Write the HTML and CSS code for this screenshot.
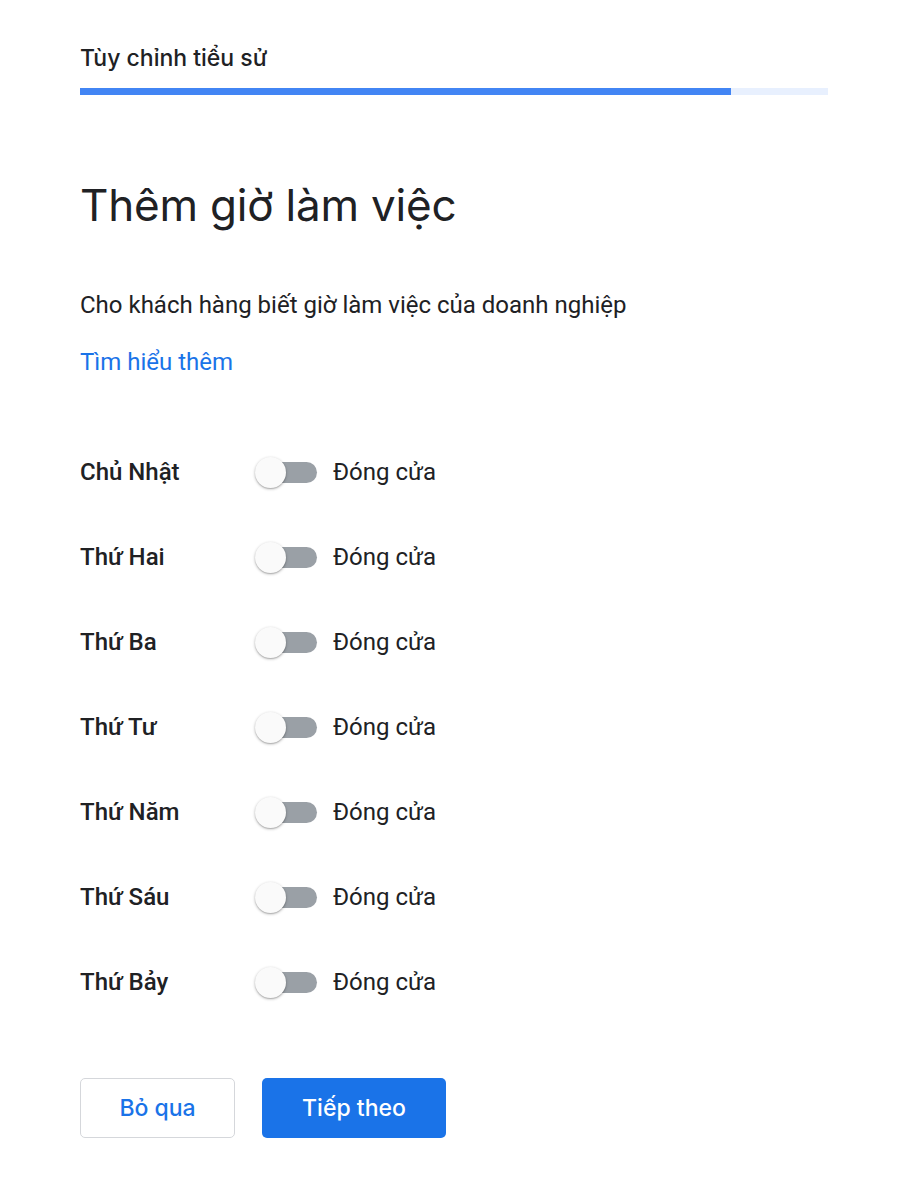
FILE: index.html
```html
<!DOCTYPE html>
<html lang="vi">
<head>
<meta charset="utf-8">
<title>Thêm giờ làm việc</title>
<link rel="stylesheet" href="styles.css">
</head>
<body>
<main class="page">
  <header class="top">
    <div class="top-title">Tùy chỉnh tiểu sử</div>
    <div class="progress"><div class="progress-fill" style="width: 87%"></div></div>
  </header>

  <h1 class="title">Thêm giờ làm việc</h1>
  <p class="desc">Cho khách hàng biết giờ làm việc của doanh nghiệp</p>
  <a class="link" href="#">Tìm hiểu thêm</a>

  <ul class="days">
    <li class="day"><span class="day-name">Chủ Nhật</span><span class="switch"><span class="thumb"></span></span><span class="status">Đóng cửa</span></li>
    <li class="day"><span class="day-name">Thứ Hai</span><span class="switch"><span class="thumb"></span></span><span class="status">Đóng cửa</span></li>
    <li class="day"><span class="day-name">Thứ Ba</span><span class="switch"><span class="thumb"></span></span><span class="status">Đóng cửa</span></li>
    <li class="day"><span class="day-name">Thứ Tư</span><span class="switch"><span class="thumb"></span></span><span class="status">Đóng cửa</span></li>
    <li class="day"><span class="day-name">Thứ Năm</span><span class="switch"><span class="thumb"></span></span><span class="status">Đóng cửa</span></li>
    <li class="day"><span class="day-name">Thứ Sáu</span><span class="switch"><span class="thumb"></span></span><span class="status">Đóng cửa</span></li>
    <li class="day"><span class="day-name">Thứ Bảy</span><span class="switch"><span class="thumb"></span></span><span class="status">Đóng cửa</span></li>
  </ul>

  <div class="actions">
    <button class="btn btn-outline">Bỏ qua</button>
    <button class="btn btn-primary">Tiếp theo</button>
  </div>
</main>
</body>
</html>
```

FILE: styles.css
```css
* { box-sizing: border-box; }
html, body {
  margin: 0;
  padding: 0;
  background: #ffffff;
}
body {
  font-family: Roboto, "Noto Sans", Arial, sans-serif;
  color: #202124;
}
.page {
  padding: 0 92px 0 80px;
}
.top {
  padding-top: 45px;
}
.top-title {
  font-family: Inter, Roboto, sans-serif;
  font-size: 23px;
  font-weight: 500;
  line-height: 26px;
  color: #202124;
}
.progress {
  margin-top: 17px;
  height: 7px;
  background: #e8f0fe;
  width: 748px;
}
.progress-fill {
  height: 100%;
  background: #4285f4;
}
.title {
  margin: 82px 0 0;
  font-family: Inter, Roboto, sans-serif;
  font-weight: 400;
  font-size: 44px;
  line-height: 56px;
  color: #202124;
  letter-spacing: -0.2px;
}
.desc {
  margin: 56px 0 0;
  font-size: 24px;
  line-height: 32px;
  color: #202124;
}
.link {
  display: inline-block;
  margin-top: 25px;
  font-size: 24px;
  line-height: 32px;
  color: #1a73e8;
  text-decoration: none;
}
.days {
  list-style: none;
  margin: 77px 0 0;
  padding: 0;
  display: flex;
  flex-direction: column;
  gap: 51px;
}
.day {
  display: flex;
  align-items: center;
  height: 34px;
}
.day-name {
  width: 175px;
  font-size: 24px;
  font-weight: 500;
  color: #202124;
}
.switch {
  position: relative;
  width: 62px;
  height: 21px;
  display: flex;
  align-items: center;
}
.switch::before {
  content: "";
  position: absolute;
  left: 6px;
  right: 0;
  top: 0;
  bottom: 0;
  background: #9aa0a6;
  border-radius: 11px;
}
.thumb {
  position: absolute;
  left: 0;
  top: 50%;
  width: 31px;
  height: 31px;
  margin-top: -15.5px;
  border-radius: 50%;
  background: #fafafa;
  box-shadow: 0 1px 3px rgba(0,0,0,0.3), 0 1px 1px rgba(0,0,0,0.12);
}
.status {
  margin-left: 16px;
  font-size: 24px;
  color: #202124;
}
.actions {
  margin-top: 79px;
  display: flex;
  gap: 27px;
}
.btn {
  height: 60px;
  border-radius: 5px;
  font-family: Inter, Roboto, sans-serif;
  font-size: 23px;
  font-weight: 500;
  cursor: pointer;
}
.btn-outline {
  width: 155px;
  background: #fff;
  border: 1.5px solid #d5d7db;
  color: #1a73e8;
}
.btn-primary {
  width: 184px;
  background: #1a73e8;
  border: none;
  color: #fff;
}
```
